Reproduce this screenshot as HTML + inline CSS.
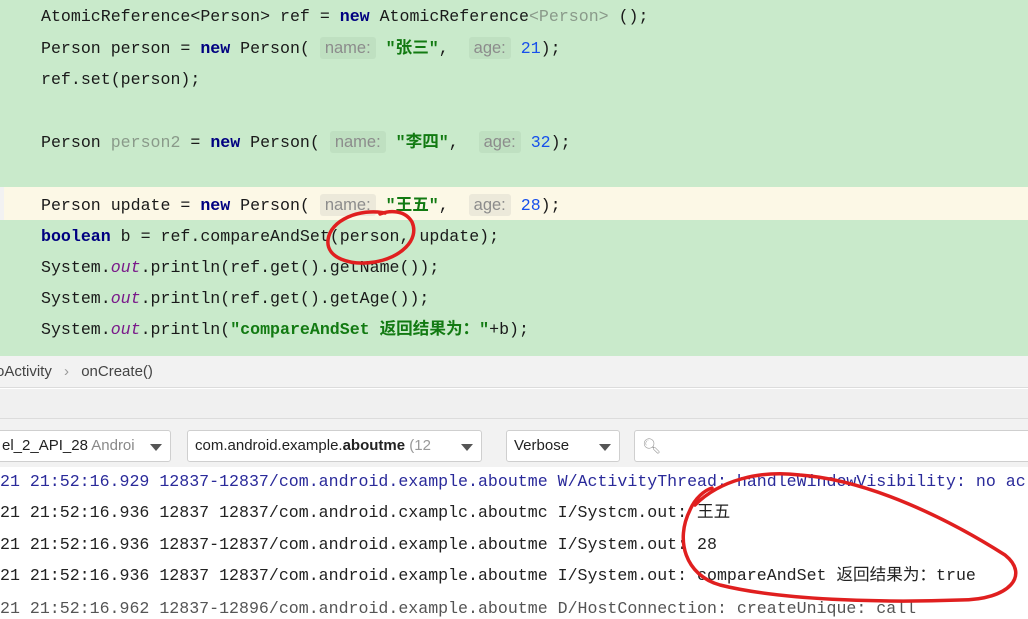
<!DOCTYPE html>
<html><head><meta charset="utf-8"><style>
*{margin:0;padding:0;box-sizing:border-box}
body{width:1028px;height:605px;overflow:hidden;background:#fff;position:relative;font-family:"Liberation Mono","Noto Sans CJK SC",monospace}
.code{position:absolute;left:0;top:0;width:1028px;height:356px;background:#c9eacb}
.yl{position:absolute;left:4px;top:187px;width:1024px;height:33px;background:#fcf8e6}
.gut{position:absolute;left:0;top:187px;width:4px;height:33px;background:#f2f2f2}
.ln{position:absolute;left:41px;font-size:16.6px;color:#1a1a1a;white-space:pre;line-height:20px}
.k{color:#000080;font-weight:bold}
.s{color:#127a12;font-weight:bold}
.n{color:#1750eb}
.g{color:#8a9a8a}
.o{color:#7a1a8a;font-style:italic}
.h{font-family:"Liberation Sans",sans-serif;color:#8c8c8c;background:#bfe0c1;padding:2px 5px;border-radius:3px;font-size:16.5px}
.yl-h{background:#ece9da}
.bc{position:absolute;left:0;top:356px;width:1028px;height:32px;background:#f2f2f2;border-bottom:1px solid #dcdcdc;font-family:"Liberation Sans",sans-serif;font-size:15px;color:#444;padding:7px 0 0 0}
.tb{position:absolute;left:0;top:389px;width:1028px;height:30px;background:#f0f0f0;border-bottom:1px solid #dcdcdc}
.dr{position:absolute;left:0;top:419px;width:1028px;height:48px;background:#f2f2f2}
.dd{position:absolute;top:11px;height:32px;background:#fff;border:1px solid #cfcfcf;border-radius:3px;font-family:"Liberation Sans",sans-serif;font-size:15px;color:#222;padding:6px 0 0 7px;white-space:nowrap;overflow:hidden}
.ar{position:absolute;right:8px;top:13px;width:0;height:0;border-left:6px solid transparent;border-right:6px solid transparent;border-top:7px solid #555}
.log{position:absolute;left:0;font-size:16.6px;white-space:pre;color:#222;line-height:20px}
</style></head><body>
<div class="code"></div>
<div class="yl"></div><div class="gut"></div>
<div class="ln" style="top:7px">AtomicReference&lt;Person&gt; ref = <span class="k">new</span> AtomicReference<span class="g">&lt;Person&gt;</span> ();</div>
<div class="ln" style="top:38px">Person person = <span class="k">new</span> Person( <span class="h">name:</span> <span class="s">"张三"</span>,  <span class="h">age:</span> <span class="n">21</span>);</div>
<div class="ln" style="top:70px">ref.set(person);</div>
<div class="ln" style="top:132px">Person <span class="g">person2</span> = <span class="k">new</span> Person( <span class="h">name:</span> <span class="s">"李四"</span>,  <span class="h">age:</span> <span class="n">32</span>);</div>
<div class="ln" style="top:195px">Person update = <span class="k">new</span> Person( <span class="h yl-h">name:</span> <span class="s">"王五"</span>,  <span class="h yl-h">age:</span> <span class="n">28</span>);</div>
<div class="ln" style="top:227px"><span class="k">boolean</span> b = ref.compareAndSet(person, update);</div>
<div class="ln" style="top:258px">System.<span class="o">out</span>.println(ref.get().getName());</div>
<div class="ln" style="top:289px">System.<span class="o">out</span>.println(ref.get().getAge());</div>
<div class="ln" style="top:320px">System.<span class="o">out</span>.println(<span class="s">"compareAndSet 返回结果为："</span>+b);</div>
<div class="bc"><span style="margin-left:-4px">oActivity</span> <span style="color:#999;margin:0 8px">›</span> onCreate()</div>
<div class="tb"></div>
<div class="dr">
 <div class="dd" style="left:-6px;width:177px">el_2_API_28 <span style="color:#888">Androi</span><span class="ar"></span></div>
 <div class="dd" style="left:187px;width:295px">com.android.example.<b>aboutme</b> <span style="color:#999">(12</span><span class="ar"></span></div>
 <div class="dd" style="left:506px;width:114px">Verbose<span class="ar"></span></div>
 <div class="dd" style="left:634px;width:400px;color:#999">&#x1F50D;&#xFE0E;</div>
</div>
<div class="log" style="top:472px;color:#2a2a9a">21 21:52:16.929 12837-12837/com.android.example.aboutme W/ActivityThread: handleWindowVisibility: no ac</div>
<div class="log" style="top:503px">21 21:52:16.936 12837 12837/com.android.cxamplc.aboutmc I/Systcm.out: 王五</div>
<div class="log" style="top:535px">21 21:52:16.936 12837-12837/com.android.example.aboutme I/System.out: 28</div>
<div class="log" style="top:566px">21 21:52:16.936 12837 12837/com.android.example.aboutme I/System.out: compareAndSet 返回结果为：true</div>
<div class="log" style="top:599px;color:#555">21 21:52:16.962 12837-12896/com.android.example.aboutme D/HostConnection: createUnique: call</div>
<svg style="position:absolute;left:0;top:0" width="1028" height="605">
<g fill="none" stroke="#e01f1f" stroke-width="3.5" stroke-linecap="round">
<path d="M385 213 C360 208 330 220 328 240 C326 258 350 266 375 262 C400 258 420 240 412 222 C405 210 390 210 380 214"/>
<path d="M695 505 C720 480 760 470 800 475 C870 480 950 520 1005 555 C1030 575 1010 600 960 600 C880 603 780 600 720 585 C685 575 675 540 690 510 C695 498 705 490 712 488"/>
</g></svg>
</body></html>
